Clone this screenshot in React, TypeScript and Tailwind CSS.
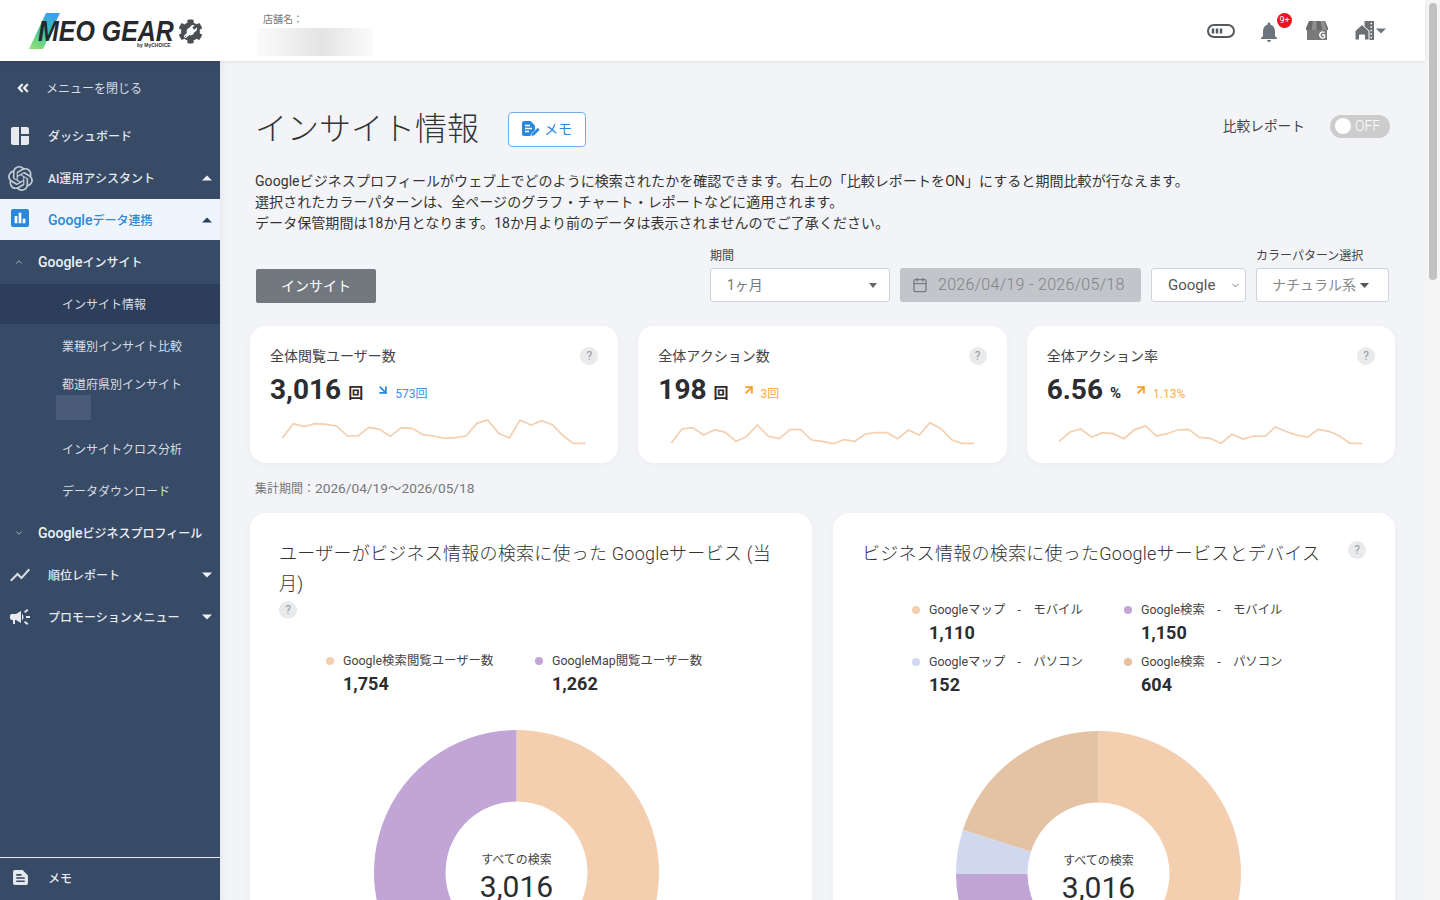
import { ArrowDownRight, ArrowUpRight, Calendar, ChevronDown, ChevronUp } from "lucide-react";
import { FaAngleDoubleLeft, FaCog, FaWrench } from "react-icons/fa";
import { MdBarChart, MdCampaign, MdNotifications, MdShowChart, MdSpaceDashboard } from "react-icons/md";
import { SiOpenai } from "react-icons/si";

const ORANGE = "#f3cfb0";
const PURPLE = "#c1a5d6";
const LAVENDER = "#d0d8f0";
const TAN = "#e4c2a4";

// traced from the reference, x/y are in 3x page pixels
const SPARKS = [
  { x: 30, points: "127,354 160,311 193,320 225,311 258,313 290,318 322,348 355,347 387,322 419,328 451,349 484,323 516,325 549,344 581,348 613,355 646,353 678,348 711,310 743,300 776,340 808,354 840,300 873,315 905,302 937,314 970,348 1000,370 1036,370" },
  { x: 24, points: "124,369 156,327 188,323 221,345 254,329 286,337 318,364 350,350 382,315 415,349 448,356 480,329 512,329 545,360 577,364 610,371 642,359 674,364 706,342 738,338 771,338 803,356 835,330 868,345 900,308 933,326 965,359 995,370 1032,370" },
  { x: 21, points: "117,364 150,336 182,327 215,351 247,338 279,341 312,356 345,328 377,318 409,348 441,341 473,330 506,328 538,352 570,355 603,370 636,343 668,357 700,348 735,349 766,321 800,335 833,346 863,351 895,328 927,334 960,349 990,370 1026,370" },
];

function Caret({ up, dark, color }: { up?: boolean; dark?: boolean; color?: string }) {
  return (
    <svg width="10" height="6" viewBox="0 0 10 6" className="shrink-0">
      <path d={up ? "M5 0.5 10 5.5H0Z" : "M0 0.5H10L5 5.5Z"} fill={color ?? (dark ? "#2d4059" : "#eef1f5")} />
    </svg>
  );
}

function DocIcon({ lines, size }: { lines: string; size: number }) {
  return (
    <svg width={size} height={size} viewBox="0 0 16 16" fill="currentColor">
      <path d="M1 2.5A1.5 1.5 0 0 1 2.5 1H10L15 6V13.5A1.5 1.5 0 0 1 13.5 15H2.5A1.5 1.5 0 0 1 1 13.5Z" />
      <path d="M4 5.5H9M4 8.5H12M4 11.5H12" stroke={lines} strokeWidth="1.5" />
    </svg>
  );
}

// memo button: solid note with a pen across its lower right corner
function NoteEditIcon() {
  return (
    <svg width="19" height="17" viewBox="0 0 19 17" fill="currentColor">
      <path d="M0 2A2 2 0 0 1 2 0H8.5L13 4.5V10L8 15H2A2 2 0 0 1 0 13Z" />
      <path d="M3 4.5H8M3 7.5H10M3 10.5H7" stroke="#fff" strokeWidth="1.4" />
      <path d="M9 15.5 9.8 12.5 15.8 6.5 18 8.7 12 14.7Z" stroke="#fff" strokeWidth="0.6" />
    </svg>
  );
}

function Help({ className = "" }: { className?: string }) {
  return (
    <span className={`flex h-[18px] w-[18px] shrink-0 items-center justify-center rounded-full bg-[#e9eaec] text-[12px] text-[#9a9da3] ${className}`}>
      ?
    </span>
  );
}

function NavRow({ icon, label, caret }: { icon: React.ReactNode; label: React.ReactNode; caret?: "up" | "down" }) {
  return (
    <div className="flex h-[42px] items-center pr-[8px] text-[12px] font-medium text-[#e6e9ee]">
      <span className="flex w-[48px] shrink-0 items-center justify-center pr-[8px]">{icon}</span>
      <span className="flex-1 pt-[2px]">{label}</span>
      {caret && <Caret up={caret === "up"} />}
    </div>
  );
}

function SubRow({ label, active }: { label: string; active?: boolean }) {
  return (
    <div className={`flex h-[42px] items-center pl-[62px] pt-[2px] text-[12px] text-[#d9dde4] ${active ? "border-y border-[#374a66] bg-[#2c3e5a]" : ""}`}>
      {label}
    </div>
  );
}

function Sidebar() {
  return (
    <aside className="flex h-[839px] w-[220px] shrink-0 flex-col bg-[#374a66]">
      <div className="flex h-[54px] items-center pl-[16px] text-[12px] text-[#d9dde4]">
        <FaAngleDoubleLeft size={14} className="mr-[16px] text-[#eef1f5]" />
        <span className="pt-[2px]">メニューを閉じる</span>
      </div>
      <NavRow icon={<MdSpaceDashboard size={24} className="text-[#e6e9ee]" />} label="ダッシュボード" />
      <NavRow icon={<SiOpenai size={25} className="text-[#c6ccd6]" />} label="AI運用アシスタント" caret="up" />
      <div className="flex h-[41px] items-center bg-[#eef5fc] pr-[8px] text-[12px] font-medium text-[#2a88dc]">
        <span className="flex w-[48px] shrink-0 items-center justify-center pb-[4px] pr-[8px]">
          <span className="flex h-[18px] w-[18px] items-center justify-center rounded-[2px] bg-[#2a88dc]">
            <MdBarChart size={16} className="text-white" />
          </span>
        </span>
        <span className="flex-1 pt-[2px]"><span className="text-[14px]">Google</span>データ連携</span>
        <Caret up dark />
      </div>
      <div className="flex h-[43px] items-center text-[12px] font-medium text-[#eef1f5]">
        <ChevronUp size={10} className="ml-[14px] mr-[14px] text-[#c6ccd6]" />
        <span className="pt-[2px]"><span className="text-[14px]">Google</span>インサイト</span>
      </div>
      <SubRow label="インサイト情報" active />
      <SubRow label="業種別インサイト比較" />
      <div className="flex h-[61px] flex-col pl-[56px] pt-[9px] text-[12px] text-[#d9dde4]">
        <span className="pl-[6px] leading-[18px]">都道府県別インサイト</span>
        <div className="mt-px h-[25px] w-[35px] bg-[#4a5b77]" />
      </div>
      <SubRow label="インサイトクロス分析" />
      <SubRow label="データダウンロード" />
      <div className="flex h-[42px] items-center text-[12px] font-medium text-[#eef1f5]">
        <ChevronDown size={10} className="ml-[14px] mr-[14px] text-[#c6ccd6]" />
        <span className="pt-[1px]"><span className="text-[14px]">Google</span>ビジネスプロフィール</span>
      </div>
      <NavRow icon={<MdShowChart size={24} className="text-[#d9dde4]" />} label="順位レポート" caret="down" />
      <NavRow icon={<MdCampaign size={24} className="text-[#e6e9ee]" />} label="プロモーションメニュー" caret="down" />
      <div className="mt-auto flex h-[43px] items-center border-t border-[#e6e9ee] text-[12px] font-medium text-[#e6e9ee]">
        <span className="flex w-[48px] shrink-0 items-center justify-center pb-[4px] pr-[8px]">
          <DocIcon size={17} lines="#374a66" />
        </span>
        メモ
      </div>
    </aside>
  );
}

function Logo() {
  return (
    <div className="flex w-[257px] shrink-0 items-center pl-[29px]">
      <div className="relative flex h-[36px] w-[149px] items-center">
        <svg width="32" height="36" viewBox="0 0 32 36" className="absolute left-0 top-0">
          <defs>
            <linearGradient id="logoFill" x1="0.7" y1="0" x2="0.2" y2="1">
              <stop offset="0" stopColor="#3f9df0" />
              <stop offset="0.5" stopColor="#35c6a8" />
              <stop offset="1" stopColor="#8fe070" />
            </linearGradient>
          </defs>
          <path d="M17 0H31L14 36H0Z" fill="url(#logoFill)" />
        </svg>
        <span className="relative ml-[9px] h-[20px] origin-left scale-x-[0.86] whitespace-nowrap font-['Liberation_Sans',sans-serif] text-[29px] font-bold italic leading-[20px] text-[#26282c]">
          MEO GEAR
        </span>
        <span className="absolute left-[108px] top-[29px] font-['Liberation_Sans',sans-serif] text-[5px] font-bold leading-[7px] text-[#333]">
          by MyCHOICE
        </span>
      </div>
      <div className="relative mt-[2px] flex">
        <FaCog size={25} className="text-[#4b4e52]" />
        <FaWrench size={13} className="absolute left-[6px] top-[6px] text-white" />
      </div>
    </div>
  );
}

function Header() {
  return (
    <header className="relative z-10 flex h-[61px] items-center bg-white pr-[39px] shadow-[0_1px_4px_rgba(0,0,0,0.08)]">
      <Logo />
      <div className="flex flex-col self-start pt-[13px]">
        <span className="pl-[6px] text-[10px] leading-[14px] text-[#777]">店舗名：</span>
        <div className="mt-px h-[28px] w-[117px] bg-[linear-gradient(90deg,#fbfbfb,#e4e4e4_55%,#fbfbfb)]" />
      </div>
      <div className="ml-auto flex items-center">
        <svg width="28" height="14" viewBox="0 0 28 14" className="mr-[22px]">
          <rect x="1" y="1" width="26" height="12" rx="6" fill="none" stroke="#55585c" strokeWidth="2" />
          <path d="M6 4.5V9.5M10 4.5V9.5M14 4.5V9.5" stroke="#55585c" strokeWidth="2.4" />
        </svg>
        <div className="relative mr-[25px] mt-[2px] flex">
          <MdNotifications size={24} className="text-[#6c757d]" />
          <span className="absolute left-[20px] top-[-7px] flex h-[15px] w-[15px] items-center justify-center rounded-full bg-[#e8141e] text-[9px] leading-none text-white">
            9+
          </span>
        </div>
        <svg width="22" height="19" viewBox="0 0 22 19" className="mr-[27px]">
          <path d="M3 0H19L22 7V9H0V7Z" fill="#6a6a6a" />
          <path d="M7 0H10.5V9H5.5ZM14.5 0H18L21 9H16Z" fill="#8f8f8f" />
          <path d="M1 9H21V19H1Z" fill="#7a7a7a" />
          <path d="M18.5 11.5A3 3 0 1 0 18.5 16.5V14H16" fill="none" stroke="#fff" strokeWidth="1.4" />
        </svg>
        <svg width="19" height="19" viewBox="0 0 19 19" className="mr-[2px]">
          <path d="M9.5 0H19V19H9.5Z" fill="#6c6f73" />
          <path d="M0 10 7 3.5 14 10V19H9.5V14H4.5V19H0Z" fill="#6c6f73" stroke="#fff" strokeWidth="1" />
          <path d="M15.5 2.5H17M15.5 6H17M15.5 9.5H17M15.5 13H17M15.5 16.5H17" stroke="#fff" strokeWidth="1.6" />
        </svg>
        <Caret color="#6c757d" />
      </div>
    </header>
  );
}

function StatCard({ title, value, unit, delta, up, spark }: { title: string; value: string; unit: string; delta: string; up: boolean; spark: number }) {
  const tone = up ? "text-[#fbac45]" : "text-[#3b94e2]";
  return (
    <div className="flex h-[137px] flex-col rounded-[16px] bg-white px-[20px] pt-[20px] shadow-[0_2px_8px_rgba(0,0,0,0.03)]">
      <div className="flex h-[20px] items-center justify-between text-[14px] text-[#444]">
        {title}
        <Help />
      </div>
      <div className="mt-[7px] flex h-[34px] items-center">
        <span className="text-[28px] font-bold text-[#2b2d31]">{value}</span>
        <span className="ml-[7px] mt-[6px] text-[15px] font-bold text-[#2b2d31]">{unit}</span>
        {up ? (
          <ArrowUpRight size={14} strokeWidth={3} className="ml-[13px] text-[#fb9d2b]" />
        ) : (
          <ArrowDownRight size={14} strokeWidth={3} className="ml-[13px] text-[#2a88dc]" />
        )}
        <span className={`ml-[5px] mt-[8px] text-[12px] ${tone}`}>{delta}</span>
      </div>
      <svg width="369" height="34" viewBox={`${SPARKS[spark].x} 276 1107 102`} className="ml-[-20px] mt-[5px] block shrink-0">
        <polyline points={SPARKS[spark].points} fill="none" stroke={ORANGE} strokeWidth="5" />
      </svg>
    </div>
  );
}

function arc(from: number, to: number) {
  const R = 142.5;
  const r = 71;
  const p = (rad: number, f: number) => {
    const a = f * 2 * Math.PI;
    return `${142.5 + rad * Math.sin(a)} ${142.5 - rad * Math.cos(a)}`;
  };
  const large = to - from > 0.5 ? 1 : 0;
  return `M${p(R, from)}A${R} ${R} 0 ${large} 1 ${p(R, to)}L${p(r, to)}A${r} ${r} 0 ${large} 0 ${p(r, from)}Z`;
}

function Donut({ parts, className }: { parts: { value: number; color: string }[]; className: string }) {
  const total = parts.reduce((sum, part) => sum + part.value, 0);
  let at = 0;
  return (
    <div className={`relative h-[285px] w-[285px] ${className}`}>
      <svg width="285" height="285" viewBox="0 0 285 285">
        {parts.map((part) => {
          const from = at / total;
          at += part.value;
          return <path key={part.color} d={arc(from, at / total)} fill={part.color} />;
        })}
      </svg>
      <div className="absolute inset-x-0 top-[120px] flex flex-col items-center">
        <span className="text-[12px] leading-[20px] text-[#444]">すべての検索</span>
        <span className="mt-[5px] text-[30px] leading-[24px] text-[#2b2d31]">3,016</span>
      </div>
    </div>
  );
}

function Legend({ color, label, value, w }: { color: string; label: string; value: string; w: string }) {
  return (
    <div className={`flex items-start ${w}`}>
      <span className="mr-[9px] mt-[6px] h-[8px] w-[8px] shrink-0 rounded-full" style={{ backgroundColor: color }} />
      <div>
        <div className="whitespace-pre text-[12.4px] leading-[20px] text-[#444]">{label}</div>
        <div className="mt-px text-[18px] font-bold leading-[24px] text-[#2b2d31]">{value}</div>
      </div>
    </div>
  );
}

function Main() {
  return (
    <main className="h-[839px] flex-1 overflow-hidden bg-[#f3f4f7] px-[30px] shadow-[inset_6px_0_8px_-6px_rgba(0,0,0,0.08)]">
      <div className="flex items-center px-[5px] pt-[48px]">
        <h1 className="text-[32px] font-light leading-[40px] text-[#333]">インサイト情報</h1>
        <button className="ml-[29px] flex h-[35px] w-[78px] items-center justify-center gap-[3px] rounded-[4px] border border-[#6fb0ea] bg-white text-[14px] text-[#2a88dc]">
          <NoteEditIcon />
          メモ
        </button>
        <span className="mb-[6px] ml-auto text-[13.7px] text-[#444]">比較レポート</span>
        <div className="mb-[6px] ml-[25px] flex h-[23px] w-[60px] items-center rounded-full bg-[#ccc] pl-[5px] text-[14px] font-light leading-none text-white">
          <span className="mr-[4px] h-[16px] w-[16px] rounded-full bg-white" />
          OFF
        </div>
      </div>

      <p className="mt-[22px] px-[5px] text-[14px] leading-[21px] tracking-[0.07px] text-[#333]">
        Googleビジネスプロフィールがウェブ上でどのように検索されたかを確認できます。右上の「比較レポートをON」にすると期間比較が行なえます。
        <br />
        選択されたカラーパターンは、全ページのグラフ・チャート・レポートなどに適用されます。
        <br />
        データ保管期間は18か月となります。18か月より前のデータは表示されませんのでご了承ください。
      </p>

      <div className="mt-[14px] flex items-end pl-[6px] pr-[6px]">
        <button className="mb-[-1px] h-[34px] w-[120px] rounded-[2px] bg-[#73787f] text-[14px] text-white">インサイト</button>
        <div className="ml-[334px] flex flex-col">
          <span className="mb-[4px] text-[12px] leading-[16px] text-[#444]">期間</span>
          <div className="flex h-[34px] w-[180px] items-center justify-between rounded-[3px] border border-[#ced4da] bg-white pl-[16px] pr-[12px] text-[14px] text-[#777]">
            1ヶ月
            <svg width="8" height="5" viewBox="0 0 8 5"><path d="M0 0H8L4 5Z" fill="#666" /></svg>
          </div>
        </div>
        <div className="ml-[10px] flex h-[34px] w-[241px] items-center rounded-[3px] bg-[#c2c5c9] pl-[12px] text-[16px] font-light tracking-[0.3px] text-[#7f8388]">
          <Calendar size={16} className="mr-[10px] text-[#777b80]" />
          2026/04/19 - 2026/05/18
        </div>
        <div className="ml-[10px] flex h-[34px] w-[95px] items-center justify-between rounded-[3px] border border-[#ced4da] bg-white pl-[16px] pr-[4px] text-[15px] text-[#555]">
          Google
          <ChevronDown size={11} className="text-[#777]" />
        </div>
        <div className="ml-[10px] flex flex-col">
          <span className="mb-[4px] text-[12px] leading-[16px] text-[#444]">カラーパターン選択</span>
          <div className="flex h-[34px] w-[133px] items-center rounded-[3px] border border-[#ced4da] bg-white pl-[15px] text-[14px] text-[#888]">
            ナチュラル系
            <svg width="9" height="5" viewBox="0 0 9 5" className="ml-[4px]"><path d="M0 0H9L4.5 5Z" fill="#555" /></svg>
          </div>
        </div>
      </div>

      <div className="mt-[24px] grid grid-cols-3 gap-5">
        <StatCard title="全体閲覧ユーザー数" value="3,016" unit="回" delta="573回" up={false} spark={0} />
        <StatCard title="全体アクション数" value="198" unit="回" delta="3回" up spark={1} />
        <StatCard title="全体アクション率" value="6.56" unit="%" delta="1.13%" up spark={2} />
      </div>

      <p className="mt-[15px] h-[20px] px-[5px] text-[12px] leading-[20px] text-[#777]">
        集計期間：<span className="text-[13.7px]">2026/04/19～2026/05/18</span>
      </p>

      <div className="mt-[15px] grid grid-cols-2 gap-[21px]">
        <section className="h-[500px] rounded-[16px] bg-white px-[29px] pt-[26px] shadow-[0_2px_8px_rgba(0,0,0,0.03)]">
          <h2 className="text-[18px] font-light leading-[30px] tracking-[0.25px] text-[#333]">ユーザーがビジネス情報の検索に使った Googleサービス (当月)</h2>
          <Help className="mt-[2px]" />
          <div className="mt-[32px] flex pl-[47px]">
            <Legend color={ORANGE} label="Google検索閲覧ユーザー数" value="1,754" w="w-[209px]" />
            <Legend color={PURPLE} label="GoogleMap閲覧ユーザー数" value="1,262" w="w-[200px]" />
          </div>
          <div className="mt-[34px]">
            <Donut className="ml-[95px]" parts={[{ value: 1754, color: ORANGE }, { value: 1262, color: PURPLE }]} />
          </div>
        </section>

        <section className="h-[500px] rounded-[16px] bg-white px-[29px] pt-[26px] shadow-[0_2px_8px_rgba(0,0,0,0.03)]">
          <div className="flex items-start justify-between">
            <h2 className="text-[18px] font-light leading-[30px] tracking-[0.25px] text-[#333]">ビジネス情報の検索に使ったGoogleサービスとデバイス</h2>
            <Help className="mt-[2px]" />
          </div>
          <div className="mt-[31px] grid grid-cols-[212px_212px] gap-y-[7px] pl-[50px]">
            <Legend color={ORANGE} label="Googleマップ    -    モバイル" value="1,110" w="" />
            <Legend color={PURPLE} label="Google検索    -    モバイル" value="1,150" w="" />
            <Legend color={LAVENDER} label="Googleマップ    -    パソコン" value="152" w="" />
            <Legend color={TAN} label="Google検索    -    パソコン" value="604" w="" />
          </div>
          <div className="mt-[34px]">
            <Donut className="ml-[94px]" parts={[{ value: 1110, color: ORANGE }, { value: 1150, color: PURPLE }, { value: 152, color: LAVENDER }, { value: 604, color: TAN }]} />
          </div>
        </section>
      </div>
    </main>
  );
}

export default function App() {
  return (
    <div className="flex h-[900px] w-[1440px] overflow-hidden bg-[#f3f4f7] font-['Roboto','Noto_Sans_CJK_JP',sans-serif]">
      <div className="flex w-[1425px] shrink-0 flex-col">
        <Header />
        <div className="flex flex-1">
          <Sidebar />
          <Main />
        </div>
      </div>
      {/* page scrollbar */}
      <div className="w-[15px] bg-[#f5f5f5] pl-[4px] pr-[3px] pt-[3px]">
        <div className="h-[277px] rounded-full bg-[#c1c1c1]" />
      </div>
    </div>
  );
}
